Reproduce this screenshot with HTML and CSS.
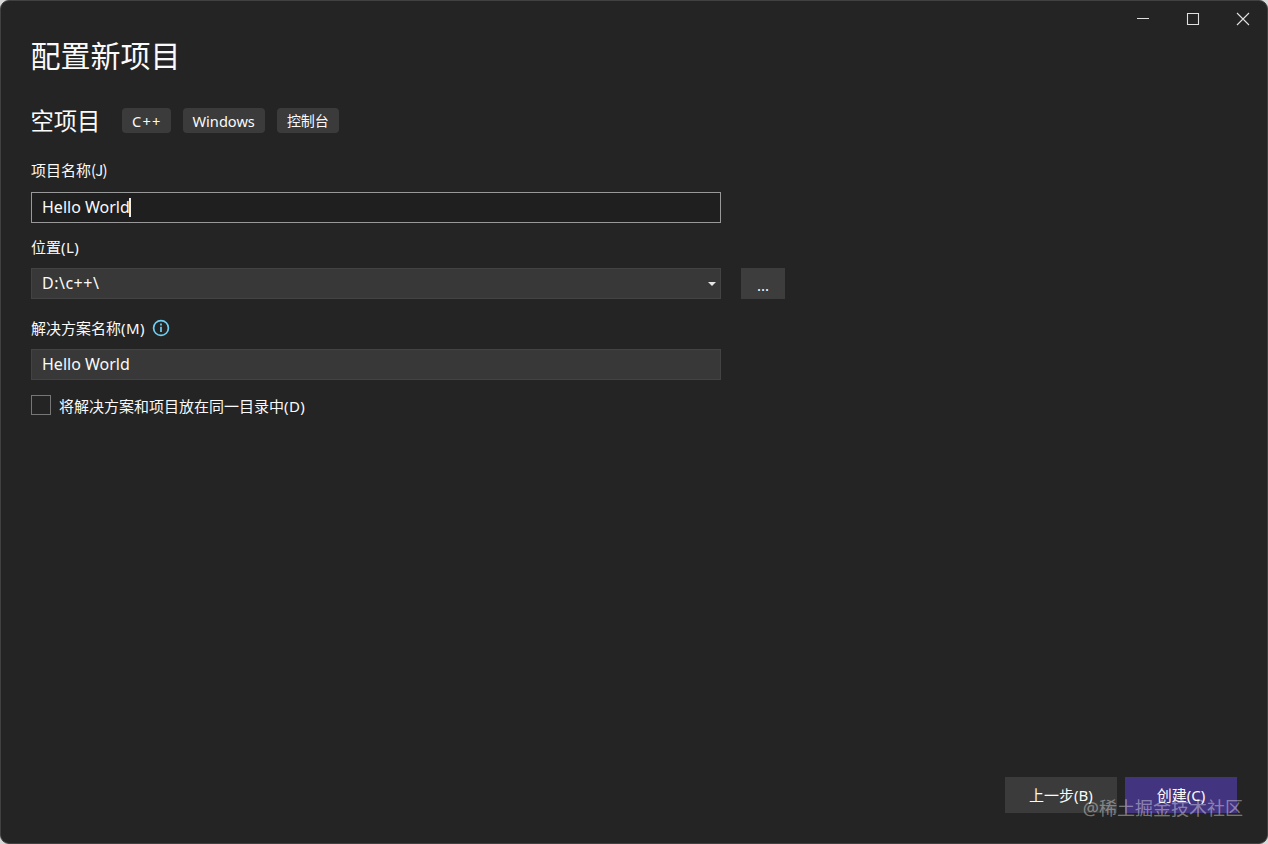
FILE: index.html
```html
<!DOCTYPE html>
<html lang="zh-CN">
<head>
	<meta charset="UTF-8">
	<meta name="viewport" content="width=device-width, initial-scale=1.0">
	<title>配置新项目</title>
	<link rel="stylesheet" href="styles.css">
</head>
<body>
	<div class="window">
		<div class="titlebar">
			<svg class="win_btn" viewBox="0 0 50 36"><path d="M19 18.5h12"/></svg>
			<svg class="win_btn" viewBox="0 0 50 36"><path d="M19.5 13.5h11v11h-11z"/></svg>
			<svg class="win_btn" viewBox="0 0 50 36"><path d="M19 13l12 12M31 13l-12 12"/></svg>
		</div>

		<div class="main">
			<h1>配置新项目</h1>
			<div class="template">
				<h2>空项目</h2>
				<span class="tag tag_lang">C++</span>
				<span class="tag">Windows</span>
				<span class="tag tag_cn">控制台</span>
			</div>

			<div class="label label_name">项目名称<span class="key_j">(J)</span></div>
			<div class="field active"><span>Hello World</span><i class="caret"></i></div>

			<div class="label label_path">位置<span class="key">(L)</span></div>
			<div class="row">
				<div class="field"><span class="path">D:\c++\</span>
					<svg class="arrow" viewBox="0 0 8 4"><path d="M0 0h8L4 4z"/></svg>
				</div>
				<div class="browse">...</div>
			</div>

			<div class="label label_solution"><span>解决方案名称<span class="key">(M)</span></span>
				<svg class="info" viewBox="0 0 18 18">
					<circle cx="9" cy="9" r="7.4"/>
					<path d="M9 7.8v5.2M9 4.6v1.9"/>
				</svg>
			</div>
			<div class="field"><span>Hello World</span></div>

			<div class="check"><i class="box"></i><span>将解决方案和项目放在同一目录中<span class="key">(D)</span></span></div>
		</div>

		<div class="footer">
			<div class="btn">上一步(B)</div>
			<div class="btn primary">创建(C)</div>
		</div>
		<div class="watermark">@稀土掘金技术社区</div>
	</div>
</body>
</html>
```
FILE: styles.css
```css
body,h1,h2{
	margin:0;
	padding:0;
	font-weight:normal;
}

body{
	background-color:#d8d8d8;
	color:#fafafa;
	font-family:"Noto Sans","Noto Sans CJK SC",sans-serif;
	font-size:15px;
}

.window{
	box-sizing:border-box;
	width:1268px;
	height:844px;
	border:1px solid #414141;
	border-radius:9px;
	background-color:#242424;
	position:relative;
	overflow:hidden;
	display:flex;
	flex-direction:column;
}

.titlebar{
	display:flex;
	justify-content:flex-end;
	height:36px;
	margin-top:-1px;
	margin-right:-1px;
}

.win_btn{
	width:50px;
	height:36px;
	fill:none;
	stroke:#e0e0e0;
	stroke-width:1.1;
}

.main{
	flex:1;
	padding-left:30px;
}

h1{
	height:44px;
	line-height:40px;
	font-size:30px;
	text-indent:-0.5px;
}

.template{
	display:flex;
	align-items:center;
	height:25px;
	margin-top:28px;
}

h2{
	width:91px;
	font-size:23.3px;
	line-height:26px;
	text-indent:-0.5px;
}

.tag{
	height:25px;
	line-height:26px;
	padding:0 10px;
	margin-right:12px;
	border-radius:4px;
	background-color:#3b3b3b;
	font-size:14.6px;
}

.tag_lang{
	padding-right:9px;
	letter-spacing:1.2px;
}

.tag_cn{
	font-size:14px;
}

.label{
	height:24px;
	line-height:24px;
}

.label_name{
	margin:25px 0 10px;
	font-family:"Noto Sans CJK SC",sans-serif;
}

.label_path{
	margin:12px 0 9px;
}

.label_solution{
	display:flex;
	align-items:center;
	margin:17px 0 9px;
}

.key{
	letter-spacing:0.4px;
}

.key_j{
	letter-spacing:-0.8px;
}

.field{
	box-sizing:border-box;
	width:690px;
	height:31px;
	line-height:29px;
	padding:0 4px 0 10px;
	border:1px solid #434343;
	background-color:#383838;
	font-size:16px;
	display:flex;
	align-items:center;
}

.active{
	background-color:#1f1f1f;
	border-color:#999;
}

.caret{
	width:2px;
	height:19px;
	margin-left:-1px;
	background-color:#eee;
}

.path{
	letter-spacing:0.5px;
}

.row{
	display:flex;
}

.arrow{
	width:8px;
	height:4px;
	margin-left:auto;
	fill:#e6e6e6;
}

.browse{
	width:44px;
	height:31px;
	line-height:34px;
	margin-left:20px;
	background-color:#3d3d3d;
	text-align:center;
}

.info{
	width:18px;
	height:18px;
	margin-left:7px;
	fill:none;
	stroke:#6fd0f2;
	stroke-width:1.7;
}

.check{
	display:flex;
	align-items:center;
	height:22px;
	margin-top:14px;
}

.box{
	box-sizing:border-box;
	width:20px;
	height:20px;
	margin-right:8px;
	border:1px solid #777;
}

.footer{
	display:flex;
	justify-content:flex-end;
	padding:0 30px 30px 0;
}

.btn{
	width:112px;
	height:36px;
	line-height:36px;
	margin-left:8px;
	background-color:#3b3b3b;
	text-align:center;
}

.primary{
	background-color:#433480;
}

/* 水印 */
.watermark{
	position:absolute;
	right:24px;
	bottom:22px;
	line-height:26px;
	font-size:18px;
	color:rgba(255,255,255,0.4);
}
```
